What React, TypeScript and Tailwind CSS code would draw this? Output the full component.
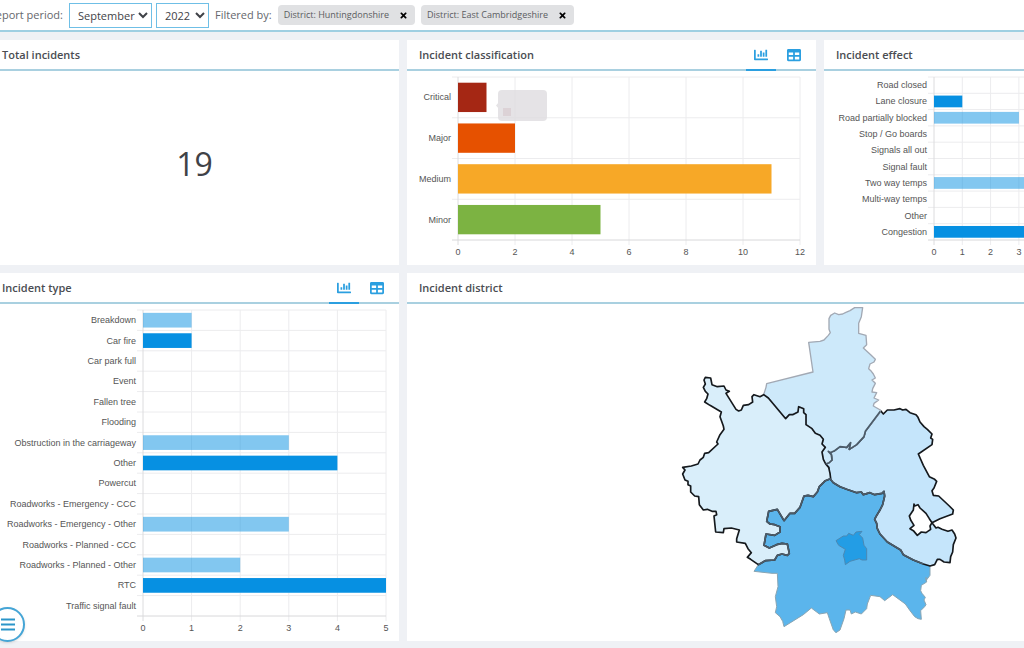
import { FaChartBar, FaTable, FaTimes } from 'react-icons/fa';
import type { ReactNode } from 'react';

interface BarItem {
  label: string;
  value: number;
  color: string;
}

// Half transparent, so the grid shows through
const LIGHT = '#0690e280';
const DARK = '#0690e2';

const CLASSIFICATION: BarItem[] = [
  { label: 'Critical', value: 1, color: '#a52714' },
  { label: 'Major', value: 2, color: '#e65100' },
  { label: 'Medium', value: 11, color: '#f7a827' },
  { label: 'Minor', value: 5, color: '#7cb342' },
];

const EFFECT: BarItem[] = [
  { label: 'Road closed', value: 0, color: LIGHT },
  { label: 'Lane closure', value: 1, color: DARK },
  { label: 'Road partially blocked', value: 3, color: LIGHT },
  { label: 'Stop / Go boards', value: 0, color: DARK },
  { label: 'Signals all out', value: 0, color: LIGHT },
  { label: 'Signal fault', value: 0, color: DARK },
  { label: 'Two way temps', value: 5, color: LIGHT },
  { label: 'Multi-way temps', value: 0, color: DARK },
  { label: 'Other', value: 0, color: LIGHT },
  { label: 'Congestion', value: 10, color: DARK },
];

const TYPES: BarItem[] = [
  { label: 'Breakdown', value: 1, color: LIGHT },
  { label: 'Car fire', value: 1, color: DARK },
  { label: 'Car park full', value: 0, color: LIGHT },
  { label: 'Event', value: 0, color: DARK },
  { label: 'Fallen tree', value: 0, color: LIGHT },
  { label: 'Flooding', value: 0, color: DARK },
  { label: 'Obstruction in the carriageway', value: 3, color: LIGHT },
  { label: 'Other', value: 4, color: DARK },
  { label: 'Powercut', value: 0, color: LIGHT },
  { label: 'Roadworks - Emergency - CCC', value: 0, color: DARK },
  { label: 'Roadworks - Emergency - Other', value: 3, color: LIGHT },
  { label: 'Roadworks - Planned - CCC', value: 0, color: DARK },
  { label: 'Roadworks - Planned - Other', value: 2, color: LIGHT },
  { label: 'RTC', value: 5, color: DARK },
  { label: 'Traffic signal fault', value: 0, color: LIGHT },
];

const MONTHS = [
  'January', 'February', 'March', 'April', 'May', 'June', 'July',
  'August', 'September', 'October', 'November', 'December',
];

interface BarChartProps {
  title: string;
  items: BarItem[];
  max: number;
  step: number;
  left: number;
  right: number;
  plotHeight: number;
  children?: ReactNode;
}

// Horizontal bar chart, one row per category
function BarChart({ title, items, max, step, left, right, plotHeight, children }: BarChartProps) {
  const top = 6;
  const bottom = top + plotHeight;
  const row = plotHeight / items.length;
  const bar = row * 0.72;
  const unit = (right - left) / max;
  const ticks = Array.from({ length: max / step + 1 }, (_, i) => i * step);

  return (
    <svg
      viewBox={`0 0 409 ${bottom + 25}`}
      className="block w-full font-['Liberation_Sans',Arial,sans-serif] text-[9px]"
      role="img"
      aria-label={title}
    >
      {items.map((item, i) => (
        <line key={item.label} x1={left - 6} x2={right} y1={top + i * row} y2={top + i * row} stroke="#ececee" />
      ))}
      {ticks.map((tick) => (
        <g key={tick}>
          <line
            x1={left + tick * unit}
            x2={left + tick * unit}
            y1={top}
            y2={bottom + 5}
            stroke={tick === 0 ? '#dcdcde' : '#ececee'}
          />
          <text x={left + tick * unit} y={bottom + 15} textAnchor="middle" fill="#555">
            {tick}
          </text>
        </g>
      ))}
      {items.map((item, i) => (
        <g key={item.label}>
          <rect x={left} y={top + i * row + (row - bar) / 2} width={item.value * unit} height={bar} fill={item.color} />
          <text x={left - 7} y={top + (i + 0.5) * row + 3} textAnchor="end" fill="#555">
            {item.label}
          </text>
        </g>
      ))}
      <line x1={left - 6} x2={right} y1={bottom} y2={bottom} stroke="#d8d8da" />
      {children}
    </svg>
  );
}

interface CardProps {
  title: string;
  className?: string;
  hasTabs?: boolean;
  children: ReactNode;
}

function Card({ title, className = '', hasTabs, children }: CardProps) {
  return (
    <section className={`flex flex-col bg-white ${className}`}>
      <header className="flex h-[31px] items-stretch justify-between border-b-2 border-[#a9d0e0] pr-2 pl-3">
        <h2 className="self-center text-[11px] leading-4 font-semibold text-[#4a4d52]">{title}</h2>
        {hasTabs && (
          <div className="-mb-0.5 flex text-[#2b9fe0]">
            <button
              type="button"
              aria-label={`${title} chart`}
              className="flex w-[30px] items-center justify-center border-b-2 border-[#2b9fe0]"
            >
              <FaChartBar size={14} />
            </button>
            <button type="button" aria-label={`${title} table`} className="ml-1 flex w-[28px] items-center justify-center border-b-2 border-transparent">
              <FaTable size={14} />
            </button>
          </div>
        )}
      </header>
      {children}
    </section>
  );
}

function FilterChip({ label }: { label: string }) {
  return (
    <span className="flex h-5 items-center rounded-sm bg-[#e0e1e3] px-1.5 text-[9px] text-[#5a5c61]">
      {label}
      <button type="button" aria-label={`Remove ${label}`} className="ml-2 flex w-3 justify-center text-black">
        <FaTimes size={9} />
      </button>
    </span>
  );
}

function DistrictMap() {
  return (
    <svg viewBox="60 42 840 990" className="mx-auto block w-[280px]" role="img" aria-label="Incidents by district" strokeLinejoin="round">
      {/* South Cambridgeshire */}
      <path
        fill="#5bb5ec"
        stroke="#8aa5b3"
        strokeWidth="3"
        d="M510 566L520 578L540 590L560 598L590 608L604 606L610 614L630 608L644 614L666 610L672 604L674 618L668 644L660 660L648 680L644 688L650 700L652 716L660 732L682 756L722 780L730 794L760 810L790 822L810 828L810 856L798 872L798 862L800 876L784 886L782 902L786 910L796 922L792 930L798 944L794 950L782 962L784 988L774 986L764 980L750 962L736 942L698 914L674 932L660 920L632 916L622 942L620 956L604 972L586 966L574 972L570 960L558 960L552 986L540 1020L528 1028L520 1020L508 986L502 968L478 972L454 954L430 974L372 1010L368 994L360 980L346 968L350 950L346 920L354 890L352 850L336 850L282 844L295 824L316 812L344 810L352 796L366 792L382 796L388 790L382 762L366 760L350 764L328 774L312 766L318 732L344 736L360 726L360 710L344 704L330 702L320 694L326 664L352 658L372 692L390 670L404 670L420 652L432 618L444 616L460 620L472 606L478 590L496 572Z"
      />
      {/* Cambridge */}
      <path
        fill="#239de5"
        stroke="#4b89b4"
        strokeWidth="3"
        d="M528 752L550 738L560 738L566 730L580 736L588 726L606 724L598 734L608 744L612 766L620 776L620 810L606 810L598 806L570 814L556 824L554 810L550 796L556 778L536 766Z"
      />
      {/* East Cambridgeshire */}
      <path
        fill="#c5e5fb"
        stroke="#15191d"
        strokeWidth="5"
        fillRule="evenodd"
        d="M510 566L520 578L540 590L560 598L590 608L604 606L610 614L630 608L644 614L666 610L672 604L674 618L668 644L660 660L648 680L644 688L650 700L652 716L660 732L682 756L722 780L730 794L760 810L790 822L810 828L824 824L832 808L840 808L852 816L870 818L872 800L878 786L880 764L888 744L884 732L876 720L864 724L846 718L834 712L828 714L816 698L840 686L878 672L880 660L868 648L836 618L820 616L816 602L822 594L830 574L824 568L808 560L790 526L775 492L816 464L818 448L812 444L816 432L802 418L792 410L780 396L774 382L768 374L750 368L738 358L728 360L720 356L702 360L682 360L670 372L662 362L616 424L612 440L590 464L568 478L572 458L560 472L540 470L524 482L505 484L514 494L516 510L497 522L506 532Z
        M816 698L808 686L798 670L780 654L774 644L764 648L762 642L760 660L748 678L752 690L762 706L750 716L760 722L772 736L784 726L798 728L812 718L810 708Z"
      />
      {/* Fenland */}
      <path
        fill="#cde9fa"
        stroke="#a2a9b4"
        strokeWidth="4"
        d="M608 53L584 53L570 62L556 68L548 72L536 74L524 69L512 76L507 86L507 118L511 128L505 136L492 150L480 154L446 157L459 246L320 281L318 292L311 314L325 324L377 386L388 374L398 374L414 366L416 350L431 356L431 368L438 374L438 404L456 416L466 430L480 436L490 448L486 462L496 472L486 486L490 508L497 522L508 518L516 510L514 494L505 484L511 488L524 482L540 470L560 472L572 458L568 478L590 464L612 440L616 424L661 366L661 360L640 348L642 340L656 330L642 324L650 308L636 306L638 296L646 280L636 270L646 264L640 252L634 244L626 236L630 222L642 216L646 208L632 194L610 174L620 164L618 136L596 130L596 100L604 80Z"
      />
      {/* Huntingdonshire */}
      <path
        fill="#d9eefa"
        stroke="#15191d"
        strokeWidth="5"
        d="M311 314L300 320L282 314L276 320L278 336L266 344L250 346L244 360L236 363L228 358L198 310L208 304L198 300L192 288L172 290L156 284L152 264L136 262L132 270L136 282L130 292L136 304L144 312L140 326L134 336L150 346L184 366L180 380L190 408L192 418L180 434L170 456L174 462L146 488L134 490L130 502L120 510L114 522L94 528L68 532L75 540L68 552L75 570L84 574L84 584L92 588L92 606L104 618L116 620L118 644L130 660L142 658L156 664L168 664L170 674L162 678L167 726L190 728L192 716L214 714L238 720L230 746L230 756L256 760L264 776L274 788L262 802L272 808L295 824L316 812L344 810L352 796L366 792L382 796L388 790L382 762L366 760L350 764L328 774L312 766L318 732L344 736L360 726L360 710L344 704L330 702L320 694L326 664L352 658L372 692L390 670L404 670L420 652L432 618L444 616L460 620L472 606L478 590L496 572L512 566L510 550L506 532L497 522L490 508L486 486L496 472L486 462L490 448L480 436L466 430L456 416L438 404L438 374L431 368L431 356L416 350L414 366L398 374L388 374L377 386L325 324Z"
      />
      {/* Inner boundaries, softer than the selected outlines */}
      <path
        fill="none"
        stroke="#4b5b69"
        strokeWidth="5"
        d="M497 522L508 518L516 510L514 494L505 484L511 488L524 482L540 470L560 472L572 458L568 478L590 464L612 440L616 424L661 364
        M295 824L316 812L344 810L352 796L366 792L382 796L388 790L382 762L366 760L350 764L328 774L312 766L318 732L344 736L360 726L360 710L344 704L330 702L320 694L326 664L352 658L372 692L390 670L404 670L420 652L432 618L444 616L460 620L472 606L478 590L496 572L510 566L520 578L540 590L560 598L590 608L604 606L610 614L630 608L644 614L666 610L672 604L674 618L668 644L660 660L648 680L644 688L650 700L652 716L660 732L682 756L722 780L730 794L760 810L790 822"
      />
    </svg>
  );
}

export default function App() {
  return (
    <div className="min-h-screen w-full overflow-hidden bg-[#eff1f5] font-['Open_Sans',sans-serif]">
      <div className="-ml-2.5 w-[calc(100%+219px)]">
        <div className="flex h-8 items-center border-b-2 border-[#9fcfe2] bg-white text-[11px] text-[#65676c]">
          <label htmlFor="month" className="flex w-[73px] shrink-0 justify-end whitespace-nowrap">
            Report period:
          </label>
          <select
            id="month"
            defaultValue="September"
            className="ml-1.5 h-[25px] w-[83px] border border-[#6fbfe6] bg-white pl-1 text-[11px] text-[#3f4247]"
          >
            {MONTHS.map((month) => (
              <option key={month}>{month}</option>
            ))}
          </select>
          <select
            aria-label="Year"
            defaultValue="2022"
            className="ml-1 h-[25px] w-[53px] border border-[#6fbfe6] bg-white pl-1 text-[11px] text-[#3f4247]"
          >
            <option>2021</option>
            <option>2022</option>
          </select>
          <span className="ml-1.5">Filtered by:</span>
          <div className="ml-1.5 flex gap-1.5">
            <FilterChip label="District: Huntingdonshire" />
            <FilterChip label="District: East Cambridgeshire" />
          </div>
        </div>

        <main className="mt-2 grid grid-cols-3 gap-2">
          <Card title="Total incidents">
            <div className="flex flex-1 items-center justify-center pb-2 text-[32px] text-[#3f4247]">19</div>
          </Card>
          <Card title="Incident classification" hasTabs>
            <BarChart title="Incident classification" items={CLASSIFICATION} max={12} step={2} left={51} right={393} plotHeight={163}>
              {/* Fading tooltip */}
              <g opacity="0.8">
                <rect x="91" y="19" width="49" height="31" rx="4" fill="#dfdde0" />
                <path d="M92 31L89 34.5L92 38Z" fill="#dfdde0" />
                <rect x="96" y="37" width="8" height="8" fill="#d4c8cc" />
              </g>
            </BarChart>
          </Card>
          <Card title="Incident effect">
            <BarChart title="Incident effect" items={EFFECT} max={10} step={1} left={110} right={393} plotHeight={163} />
          </Card>
          <Card title="Incident type" hasTabs>
            <BarChart title="Incident type" items={TYPES} max={5} step={1} left={153} right={396} plotHeight={306} />
          </Card>
          <Card title="Incident district" className="col-span-2">
            <DistrictMap />
          </Card>
        </main>
      </div>

      <button
        type="button"
        aria-label="Menu"
        className="fixed bottom-1.5 -left-2.5 flex size-[35px] items-center justify-center rounded-full border-2 border-[#45a5d6] bg-white shadow"
      >
        <svg viewBox="0 0 14 13" className="w-3.5" stroke="#2b95c9" strokeWidth="2">
          <path d="M0 1.5H14M0 6.5H14M0 11.5H14" />
        </svg>
      </button>
    </div>
  );
}
